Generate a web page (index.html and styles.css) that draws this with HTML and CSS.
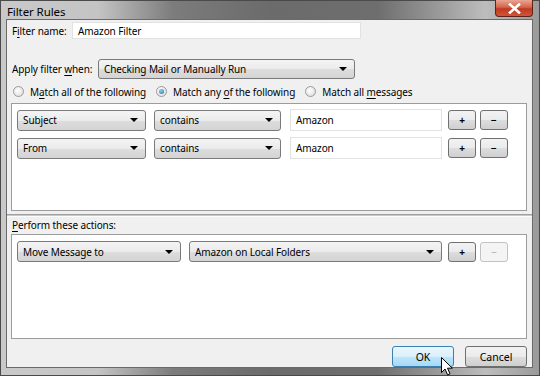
FILE: index.html
```html
<!DOCTYPE html>
<html lang="en">
<head>
  <meta charset="UTF-8">
  <title>Filter Rules</title>
  <meta name="viewport" content="width=device-width, initial-scale=1.0" />
  <link rel="stylesheet" href="styles.css">
</head>
<body>
  <div class="window">
    <div class="titlebar">
      <span class="title">Filter Rules</span>
      <span class="close">
        <svg width="13" height="11" viewBox="0 0 13 11"><path d="M2 1.5 L11 9.5 M11 1.5 L2 9.5" stroke="#fff" stroke-width="2.6" stroke-linecap="square"/></svg>
      </span>
    </div>
    <div class="client">
      <div class="name-row">
        <span class="label name-label">F<u>i</u>lter name:</span>
        <div class="textbox name-box">Amazon Filter</div>
      </div>

      <div class="apply-row">
        <span class="label apply-label">Apply filter <u>w</u>hen:</span>
        <div class="dropdown apply-select"><span>Checking Mail or Manually Run</span><i class="arrow"></i></div>
      </div>

      <div class="radios">
        <span class="radio"><span class="dot"></span><span>M<u>a</u>tch all of the following</span></span>
        <span class="radio"><span class="dot checked"></span><span>Match any <u>o</u>f the following</span></span>
        <span class="radio"><span class="dot"></span><span>Match all <u>m</u>essages</span></span>
      </div>

      <div class="panel rules">
        <div class="row">
          <div class="dropdown field"><span>Subject</span><i class="arrow"></i></div>
          <div class="dropdown op"><span>contains</span><i class="arrow"></i></div>
          <div class="textbox value">Amazon</div>
          <button class="btn small">+</button>
          <button class="btn small">&minus;</button>
        </div>
        <div class="row">
          <div class="dropdown field"><span>From</span><i class="arrow"></i></div>
          <div class="dropdown op"><span>contains</span><i class="arrow"></i></div>
          <div class="textbox value">Amazon</div>
          <button class="btn small">+</button>
          <button class="btn small">&minus;</button>
        </div>
      </div>

      <div class="separator"></div>
      <div class="label perform-label"><u>P</u>erform these actions:</div>

      <div class="panel actions">
        <div class="row">
          <div class="dropdown action"><span>Move Message to</span><i class="arrow"></i></div>
          <div class="dropdown folder"><span>Amazon on Local Folders</span><i class="arrow"></i></div>
          <button class="btn small">+</button>
          <button class="btn small disabled">&minus;</button>
        </div>
      </div>

      <div class="footer">
        <button class="btn wide default">OK</button>
        <button class="btn wide">Cancel</button>
      </div>
    </div>

    <svg class="cursor" width="13" height="19" viewBox="0 0 13 19">
      <path d="M0.5 0.5 L0.5 15.5 L4 12 L6.6 17.8 L9 16.8 L6.5 11.2 L11.3 11.2 Z" fill="#fff" stroke="#000" stroke-width="1" stroke-linejoin="round"/>
    </svg>
  </div>
</body>
</html>
```

FILE: styles.css
```css
* {
  box-sizing: border-box;
}
body {
  margin: 0;
  font-family: "Noto Sans", "Open Sans", sans-serif;
  font-size: 10px;
  letter-spacing: -0.1px;
  color: #000;
  background: #fff;
}
u {
  text-decoration-thickness: 1px;
  text-underline-offset: 2px;
}

/* window frame */
.window {
  position: relative;
  width: 540px;
  height: 376px;
  display: flex;
  flex-direction: column;
  border: 1px solid #4a4a4a;
  background: linear-gradient(90deg, #c9c9c9 0%, #c4c4c4 18%, #7c7c7c 32%, #6b6b6b 50%, #6e6e6e 70%, #9c9c9c 82%, #bdbdbd 90%, #9a9a9a 100%);
}
.titlebar {
  height: 21px;
  display: flex;
  align-items: flex-start;
  justify-content: space-between;
}
.title {
  padding: 3px 0 0 6px;
  font-size: 11.5px;
  color: #000;
}
.close {
  width: 38px;
  height: 17px;
  margin-right: 6px;
  margin-top: -1px;
  display: flex;
  align-items: center;
  justify-content: center;
  border: 1px solid #5c2418;
  border-top: none;
  border-radius: 0 0 4px 4px;
  background: linear-gradient(#e9a592, #d4654b 45%, #c0391f 55%, #d1553a);
}
.client {
  flex: 1;
  margin: 0 6px 7px 5px;
  padding: 0 5px 0 4px;
  background: #f0f0f0;
  border: 1px solid #6a6a6a;
  display: flex;
  flex-direction: column;
}
.label {
  margin-left: 1px;
  white-space: nowrap;
}

/* top fields */
.name-row {
  display: flex;
  align-items: center;
  height: 17px;
  margin-top: 2px;
}
.name-label {
  width: 60px;
}
.textbox {
  background: #fff;
  border: 1px solid #e2e2e2;
  padding-left: 5px;
  display: flex;
  align-items: center;
}
.name-box {
  width: 289px;
  height: 17px;
}
.apply-row {
  display: flex;
  align-items: center;
  height: 20px;
  margin-top: 20px;
}
.apply-label {
  width: 86px;
}
.dropdown {
  height: 21px;
  display: flex;
  align-items: center;
  justify-content: space-between;
  padding: 0 7px 0 5px;
  border: 1px solid #7a7a7a;
  border-radius: 3px;
  white-space: nowrap;
  background: linear-gradient(#f4f4f4, #ebebeb 50%, #dddddd 51%, #d4d4d4);
}
.arrow {
  width: 0;
  height: 0;
  border-left: 4px solid transparent;
  border-right: 4px solid transparent;
  border-top: 4px solid #000;
}
.apply-select {
  width: 257px;
  height: 20px;
}

/* radios */
.radios {
  display: flex;
  align-items: center;
  height: 13px;
  margin-top: 6px;
  padding-left: 2px;
  gap: 10px;
  white-space: nowrap;
}
.radio {
  display: flex;
  align-items: center;
  gap: 6px;
}
.dot {
  width: 11px;
  height: 11px;
  border-radius: 50%;
  border: 1px solid #9a9a9a;
  background: radial-gradient(circle at 40% 40%, #ffffff, #d8d8d8);
  display: flex;
  align-items: center;
  justify-content: center;
}
.dot.checked::after {
  content: "";
  width: 5px;
  height: 5px;
  border-radius: 50%;
  background: radial-gradient(circle at 40% 35%, #8fd2f0, #1f6e9a);
}

/* panels */
.panel {
  background: #fff;
  border: 1px solid #9c9c9c;
  padding: 5px 0 0 5px;
  display: flex;
  flex-direction: column;
  gap: 6px;
}
.rules {
  height: 108px;
  margin-top: 5px;
}
.actions {
  height: 105px;
  margin-top: 2px;
  padding-top: 6px;
}
.row {
  display: flex;
  align-items: center;
  height: 22px;
}
.actions .row {
  height: 21px;
}
.field {
  width: 129px;
  margin-right: 8px;
}
.op {
  width: 127px;
  margin-right: 9px;
}
.value {
  width: 152px;
  height: 22px;
  margin-right: 6px;
}
.action {
  width: 164px;
  margin-right: 8px;
}
.folder {
  width: 253px;
  margin-right: 6px;
}

/* buttons */
.btn {
  font-family: inherit;
  font-size: 10px;
  color: #000;
  padding: 0;
  border: 1px solid #707070;
  border-radius: 3px;
  background: linear-gradient(#f2f2f2, #ebebeb 50%, #dddddd 51%, #cfcfcf);
  display: flex;
  align-items: center;
  justify-content: center;
}
.small {
  width: 28px;
  height: 20px;
  margin-right: 4px;
  font-size: 10px;
  font-weight: bold;
}
.small.disabled {
  border-color: #c2c2c2;
  background: #f4f4f4;
  color: #a8a8a8;
  font-weight: normal;
}
.separator {
  margin: 3px -5px 0 -4px;
  height: 3px;
  border-top: 1px solid #a0a0a0;
  border-bottom: 1px solid #fdfdfd;
  background: #c8c8c8;
}
.perform-label {
  height: 14px;
  line-height: 14px;
  margin-top: 1px;
}
.footer {
  display: flex;
  justify-content: flex-end;
  gap: 11px;
  margin-top: 7px;
}
.wide {
  width: 62px;
  height: 21px;
  font-size: 10.5px;
}
.default {
  border-color: #3c7fb1;
  background: linear-gradient(#eaf6fd, #d9f0fc 50%, #bee6fd 51%, #a7d9f5);
}
.cursor {
  position: absolute;
  left: 440px;
  top: 356px;
}
```
